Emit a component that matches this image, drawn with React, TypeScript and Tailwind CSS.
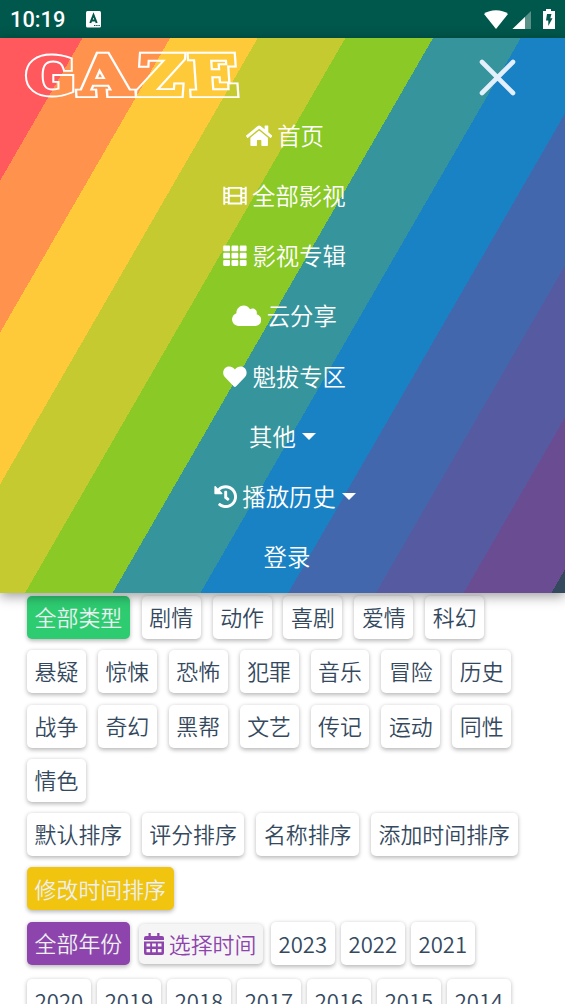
import React from "react";
import { FaHome, FaTh, FaCloud, FaHeart, FaHistory } from "react-icons/fa";

const FilmIcon = () => (
  <svg viewBox="0 0 24 24" className="h-[23.4px] w-[24px]" fill="none" stroke="currentColor" strokeWidth="2">
    <path d="M1 2.8V21.2M23 2.8V21.2M5.6 3V21M18.4 3V21M5.6 4H18.4M5.6 12H18.4M5.6 20H18.4" />
    <path d="M1 4.8H5.6M1 9.4H5.6M1 14.2H5.6M1 18.8H5.6M18.4 4.8H23M18.4 9.4H23M18.4 14.2H23M18.4 18.8H23" strokeWidth="1.6" />
  </svg>
);

const CalendarIcon = () => (
  <svg viewBox="0 0 20 22" className="h-[22px] w-5" fill="currentColor" fillRule="evenodd">
    <path d="M4.5 0H6.8V3H13.2V0H15.5V3H18Q20 3 20 5V7H0V5Q0 3 2 3H4.5ZM0 8.5H20V20Q20 22 18 22H2Q0 22 0 20ZM2.5 10.5V13.6H6.2V10.5ZM8.1 10.5V13.6H11.9V10.5ZM13.8 10.5V13.6H17.5V10.5ZM2.5 16V19.3H6.2V16ZM8.1 16V19.3H11.9V16ZM13.8 16V19.3H17.5V16Z" />
  </svg>
);

const Caret = () => (
  <svg viewBox="0 0 14 7" className="ml-1.5 h-[7px] w-3.5" fill="currentColor">
    <path d="M0 0H14L7 7Z" />
  </svg>
);

type NavEntry = { label: string; icon?: React.ReactNode; caret?: boolean; shift: string };

const NAV: NavEntry[] = [
  { label: "首页", icon: <FaHome className="h-[23.4px] w-[26.3px]" />, shift: "pl-[4.6px]" },
  { label: "全部影视", icon: <FilmIcon />, shift: "pl-[3.5px]" },
  { label: "影视专辑", icon: <FaTh className="h-[23.4px] w-[23.8px]" />, shift: "pl-[4.4px]" },
  { label: "云分享", icon: <FaCloud className="h-[23.4px] w-[29.3px]" />, shift: "pl-[4px]" },
  { label: "魁拔专区", icon: <FaHeart className="h-[23.4px] w-[23.8px]" />, shift: "pl-[4.4px]" },
  { label: "其他", caret: true, shift: "pl-0" },
  { label: "播放历史", icon: <FaHistory className="h-[23.4px] w-[23.4px]" />, caret: true, shift: "pl-[4.6px]" },
  { label: "登录", shift: "pl-[9px]" },
];

const ROWS = [
  ["全部类型", "剧情", "动作", "喜剧", "爱情", "科幻"],
  ["悬疑", "惊悚", "恐怖", "犯罪", "音乐", "冒险", "历史"],
  ["战争", "奇幻", "黑帮", "文艺", "传记", "运动", "同性"],
  ["情色"],
  ["默认排序", "评分排序", "名称排序", "添加时间排序"],
  ["修改时间排序"],
];

const ACTIVE: Record<string, string> = {
  全部类型: "bg-[#2ecc71] text-[#ecf0f1]",
  修改时间排序: "bg-[#f1c40f] text-[#ecf0f1]",
  全部年份: "bg-[#8e44ad] text-[#ecf0f1]",
};

const Chip = ({ label }: { label: string }) => (
  <div
    className={`flex h-[43px] shrink-0 items-center rounded-[5px] px-[7.6px] pb-px whitespace-nowrap shadow-[0_1.5px_4px_rgba(0,0,0,0.28)] ${
      ACTIVE[label] ?? "bg-white text-[#34495e]"
    }`}
  >
    {label}
  </div>
);

const YearChip = ({ year }: { year: string }) => (
  <div className="flex h-[43px] w-16 shrink-0 items-center justify-center rounded-[5px] bg-white pb-px text-[22.1px] text-[#34495e] shadow-[0_1.5px_4px_rgba(0,0,0,0.28)]">
    {year}
  </div>
);

const StatusBar = () => (
  <div className="flex h-[38px] shrink-0 items-center bg-[#00574b] pr-[9px] pl-[10px] text-white">
    <span className="w-[76px] pt-0.5 font-['Roboto',sans-serif] text-[21.8px] leading-none font-medium">10:19</span>
    <svg viewBox="0 0 15 17" className="h-[17px] w-[15px]">
      <rect width="15" height="16.5" rx="1.5" fill="white" />
      <path d="M4.3 12L7.5 4L10.7 12M5.3 9.4H9.7" fill="none" stroke="#00574b" strokeWidth="2" />
      <path d="M8 14.5H14" stroke="#00574b" strokeWidth="1.2" strokeDasharray="1.4 .8" />
    </svg>
    <svg viewBox="0 0 72 21" className="ml-auto h-[21px] w-[72px]">
      <path d="M0 5C6 0 18 0 24 5L12 20Z" fill="white" />
      <path d="M28.5 20L47 2V20Z" fill="white" opacity=".35" />
      <path d="M28.5 20L41 8V20Z" fill="white" />
      <path d="M59 2H62V0H67V2H71V20H59Z" fill="white" />
      <path d="M63 5H67.5L66.3 9.2H68.5L64.3 17V11.5H62Z" fill="#00574b" />
    </svg>
  </div>
);

const LogoLetters = () => (
  <>
    <text transform="translate(1.8 46.3) scale(1.06 .93)">G</text>
    <text transform="translate(55.5 47) skewX(4) scale(1.24 1)">A</text>
    <text transform="translate(112 47) skewX(-4) scale(1.16 1)">Z</text>
    <text transform="translate(166 47) skewX(4) scale(1.17 1)">E</text>
  </>
);

/* Fat outlined wordmark: a wide stroke with the letter and its inner band knocked out. */
const Logo = () => (
  <svg
    viewBox="0 0 220 56"
    className="h-14 w-[220px] overflow-visible font-['DejaVu_Serif',serif] text-[55px] leading-none font-bold"
  >
    <mask id="logo-ring" maskUnits="userSpaceOnUse" x="-10" y="-10" width="240" height="80">
      <rect x="-10" y="-10" width="240" height="80" fill="white" />
      <g fill="black" stroke="black" strokeWidth="2.4">
        <LogoLetters />
      </g>
    </mask>
    <g fill="none" stroke="white" strokeWidth="6.2" mask="url(#logo-ring)">
      <LogoLetters />
    </g>
  </svg>
);

const Menu = () => (
  <header className="relative z-10 flex h-[555px] shrink-0 flex-col bg-[linear-gradient(120deg,#ff595e_71.4px,#ff924c_71.4px_147.3px,#ffca3a_147.3px_223.2px,#c5ca30_223.2px_299.1px,#8ac926_299.1px_375px,#36949d_375px_451px,#1982c4_451px_527px,#4267ac_527px_603px,#565aa0_603px_679px,#6a4c93_679px_755px,#34495e_755px)] shadow-[0_3px_12px_rgba(0,0,0,0.4)]">
    <div className="flex h-[67.7px] shrink-0 items-start justify-between pt-2.5 pr-[49px] pl-[24px]">
      <Logo />
      <svg viewBox="0 0 37 37" className="mt-[11px] h-[37px] w-[37px]" stroke="#e3effb" strokeWidth="4.6" strokeLinecap="round">
        <path d="M3 3L34 34M34 3L3 34" />
      </svg>
    </div>
    <nav className="flex flex-col text-[23.4px] text-white">
      {NAV.map(({ label, icon, caret, shift }) => (
        <a key={label} className={`flex h-[60.15px] items-center justify-center leading-none ${shift}`}>
          {icon && <span className="mr-[5.2px]">{icon}</span>}
          {label}
          {caret && <Caret />}
        </a>
      ))}
    </nav>
  </header>
);

export default function App() {
  return (
    <div className="flex h-[1004px] w-[565px] flex-col overflow-hidden bg-white font-['Noto_Sans_CJK_SC',sans-serif] font-[350]">
      <StatusBar />
      <Menu />
      <main className="flex flex-col gap-[11.3px] pt-[3px] pl-[27px] text-[21.9px] leading-none">
        {ROWS.map((row) => (
          <div key={row[0]} className="flex gap-[11.9px]">
            {row.map((label) => (
              <Chip key={label} label={label} />
            ))}
          </div>
        ))}
        <div className="flex items-center">
          <Chip label="全部年份" />
          <button className="mt-px mr-[8px] ml-[9px] flex h-10 w-[124px] shrink-0 items-center gap-[5px] rounded-[5px] bg-[#f5f5f5] pl-[5px] whitespace-nowrap text-[#8e44ad] shadow-[0_1.5px_4px_rgba(0,0,0,0.28)]">
            <CalendarIcon />
            选择时间
          </button>
          <div className="flex gap-[6px]">
            {["2023", "2022", "2021"].map((year) => (
              <YearChip key={year} year={year} />
            ))}
          </div>
        </div>
        <div className="mt-[2.5px] flex gap-[6px]">
          {["2020", "2019", "2018", "2017", "2016", "2015", "2014"].map((year) => (
            <YearChip key={year} year={year} />
          ))}
        </div>
      </main>
    </div>
  );
}
